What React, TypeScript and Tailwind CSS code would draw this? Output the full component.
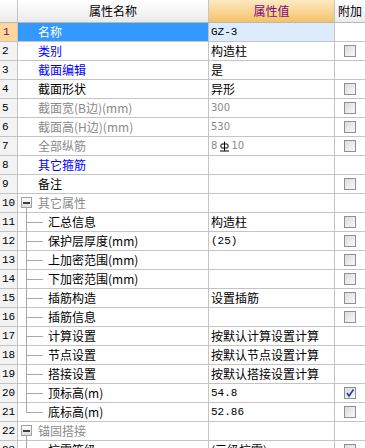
import React from "react";

type Row = {
  n: number;
  name: string;
  value?: React.ReactNode;
  tone?: "blue" | "gray" | "black";
  valueTone?: "gray" | "mono" | "cjk";
  check?: "none" | "off" | "on";
  tree?: "group" | "mid" | "last" | "first";
};

const rows: Row[] = [
  { n: 1, name: "名称", value: "GZ-3", valueTone: "mono", check: "none" },
  { n: 2, name: "类别", value: "构造柱", tone: "blue", check: "off" },
  { n: 3, name: "截面编辑", value: "是", tone: "blue", check: "none" },
  { n: 4, name: "截面形状", value: "异形", check: "off" },
  { n: 5, name: "截面宽(B边)(mm)", value: "300", tone: "gray", valueTone: "gray", check: "off" },
  { n: 6, name: "截面高(H边)(mm)", value: "530", tone: "gray", valueTone: "gray", check: "off" },
  { n: 7, name: "全部纵筋", value: "rebar", tone: "gray", valueTone: "gray", check: "off" },
  { n: 8, name: "其它箍筋", tone: "blue", check: "none" },
  { n: 9, name: "备注", check: "off" },
  { n: 10, name: "其它属性", tone: "gray", check: "none", tree: "group" },
  { n: 11, name: "汇总信息", value: "构造柱", check: "off", tree: "mid" },
  { n: 12, name: "保护层厚度(mm)", value: "(25)", valueTone: "mono", check: "off", tree: "mid" },
  { n: 13, name: "上加密范围(mm)", check: "off", tree: "mid" },
  { n: 14, name: "下加密范围(mm)", check: "off", tree: "mid" },
  { n: 15, name: "插筋构造", value: "设置插筋", check: "off", tree: "mid" },
  { n: 16, name: "插筋信息", check: "off", tree: "mid" },
  { n: 17, name: "计算设置", value: "按默认计算设置计算", check: "none", tree: "mid" },
  { n: 18, name: "节点设置", value: "按默认节点设置计算", check: "none", tree: "mid" },
  { n: 19, name: "搭接设置", value: "按默认搭接设置计算", check: "none", tree: "mid" },
  { n: 20, name: "顶标高(m)", value: "54.8", valueTone: "mono", check: "on", tree: "mid" },
  { n: 21, name: "底标高(m)", value: "52.86", valueTone: "mono", check: "off", tree: "last" },
  { n: 22, name: "锚固搭接", tone: "gray", check: "none", tree: "group" },
  { n: 23, name: "抗震等级", value: "(三级抗震)", check: "off", tree: "first" },
];

const cjk = "font-['SimSun','Noto_Sans_CJK_SC',sans-serif]";

function Rebar() {
  return (
    <svg width="9" height="11" viewBox="0 0 9 11" className="inline-block ml-[3px] mr-[2px]">
      <line x1="4.5" y1="0.5" x2="4.5" y2="10" stroke="#000" strokeWidth="1" />
      <rect x="1" y="3" width="7" height="4" rx="1" fill="none" stroke="#000" strokeWidth="1" />
      <line x1="0" y1="10" x2="9" y2="10" stroke="#000" strokeWidth="1" />
    </svg>
  );
}

function CheckBox({ on }: { on?: boolean }) {
  return (
    <div className="w-[12px] h-[12px] border border-[#8f8f8f] bg-gradient-to-br from-[#dcdcdc] to-[#f8f8f8] flex items-center justify-center">
      {on && (
        <svg width="10" height="10" viewBox="0 0 10 10">
          <path d="M2 5 L4 8 L8.5 1.5" fill="none" stroke="#2140a8" strokeWidth="1.6" />
        </svg>
      )}
    </div>
  );
}

function TreeBits({ tree }: { tree?: Row["tree"] }) {
  if (!tree) return null;
  if (tree === "group") {
    return (
      <>
        <span className="absolute left-[8px] top-[9px] w-px h-[10px] bg-[#a8a8a8]" />
        <span className="absolute left-[3px] top-[3px] w-[11px] h-[11px] border border-[#a0a0a0] bg-gradient-to-b from-white to-[#dedede] flex items-center justify-center">
          <span className="w-[7px] h-[2px] bg-[#404040]" />
        </span>
      </>
    );
  }
  return (
    <>
      <span
        className={
          tree === "last"
            ? "absolute left-[8px] -top-px w-px h-[10px] bg-[#a8a8a8]"
            : "absolute left-[8px] -top-px w-px h-[20px] bg-[#a8a8a8]"
        }
      />
      <span className="absolute left-[8px] top-[9px] w-[17px] h-px bg-[#a8a8a8]" />
    </>
  );
}

export default function App() {
  return (
    <div className={`w-[365px] h-[448px] overflow-hidden bg-white text-[12px] leading-none ${cjk}`}>
      <div className="flex h-[23px] border-b border-[#b8b8b8]">
        <div className="w-[18px] shrink-0 border-r border-[#c4c4c4] bg-gradient-to-b from-white to-[#ebebeb]" />
        <div className="w-[191px] shrink-0 border-r border-[#c4c4c4] bg-gradient-to-b from-white to-[#ebebeb] flex items-center justify-center text-black">
          属性名称
        </div>
        <div className="w-[126px] shrink-0 border-r border-[#c4c4c4] bg-gradient-to-b from-[#fde9c0] to-[#f4c267] flex items-center justify-center text-[#7a0a80]">
          属性值
        </div>
        <div className="flex-1 bg-gradient-to-b from-white to-[#ebebeb] flex items-center justify-center text-black">
          附加
        </div>
      </div>

      {rows.map((r) => {
        const sel = r.n === 1;
        const nameColor = sel
          ? "text-white"
          : r.tone === "blue"
          ? "text-[#0000ff]"
          : r.tone === "gray"
          ? "text-[#8a8a8a]"
          : "text-black";
        const valueCls =
          r.valueTone === "mono"
            ? "font-['Liberation_Mono',monospace] text-[11px] text-black"
            : r.valueTone === "gray"
            ? "font-['DejaVu_Sans','Noto_Sans_CJK_SC',sans-serif] text-[10px] text-[#8a8a8a]"
            : "text-black";
        return (
          <div key={r.n} className="flex h-[19px] border-b border-[#c4c4c4]">
            <div
              className={`w-[18px] shrink-0 border-r border-[#c4c4c4] flex items-center pl-[2px] font-['Liberation_Mono',monospace] text-[11px] ${
                sel ? "bg-[#fdd89a] text-[#6a0a6a] pl-[3px]" : "bg-[#f3f3f3] text-black"
              }`}
            >
              {r.n}
            </div>
            <div
              className={`relative w-[191px] shrink-0 border-r border-[#c4c4c4] flex items-center ${
                r.tree && r.tree !== "group" ? "pl-[30px]" : "pl-[20px]"
              } ${sel ? "bg-[#3399ff]" : ""} ${nameColor}`}
            >
              <TreeBits tree={r.tree} />
              {r.name}
            </div>
            <div
              className={`w-[126px] shrink-0 border-r border-[#c4c4c4] flex items-center pl-[2px] ${
                sel ? "bg-[#ddecfd]" : ""
              } ${valueCls}`}
            >
              {r.value === "rebar" ? (
                <span className="flex items-center">
                  8<Rebar />10
                </span>
              ) : (
                r.value
              )}
            </div>
            <div className="flex-1 flex items-center pl-[9px]">
              {r.check !== "none" && <CheckBox on={r.check === "on"} />}
            </div>
          </div>
        );
      })}
    </div>
  );
}
